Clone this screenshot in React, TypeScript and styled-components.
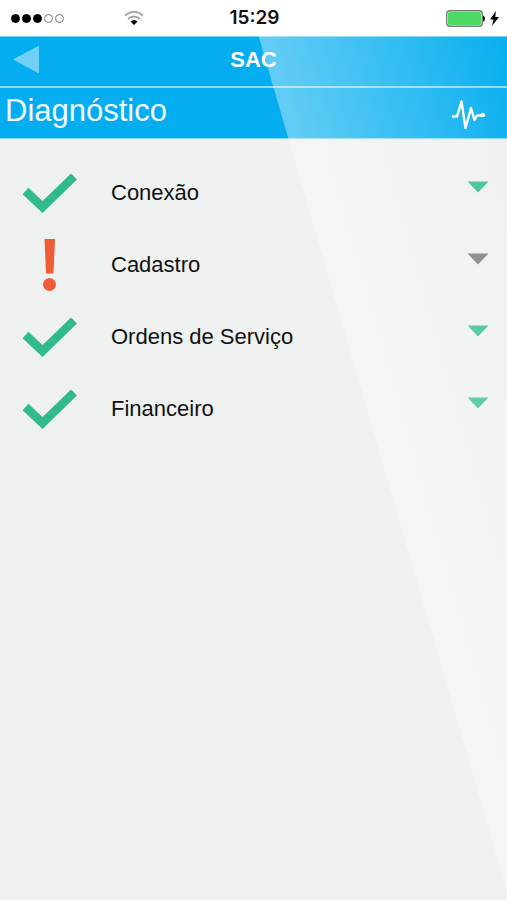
import React from "react";
import styled, { createGlobalStyle } from "styled-components";

const GlobalStyle = createGlobalStyle`
  *, *::before, *::after { box-sizing: border-box; }
  body {
    margin: 0;
    background: #eef1f0;
    font-family: "Liberation Sans", Arial, sans-serif;
    color: #111;
  }
  button { font: inherit; color: inherit; border: 0; padding: 0; background: none; cursor: pointer; }
  svg { display: block; }
`;

const Screen = styled.div`
  display: flex;
  flex-direction: column;
  min-height: 100vh;
`;

const StatusBar = styled.div`
  display: grid;
  grid-template-columns: 1fr auto 1fr;
  align-items: center;
  height: 36px;
  padding: 0 8px 0 10px;
  background: #fff;
`;

const Signal = styled.div`
  display: flex;
  align-items: center;
  gap: 60px;
  padding-left: 1px;
`;

const SignalDots = styled.div`
  display: flex;
  gap: 2px;
`;

const Dot = styled.span<{ $filled: boolean }>`
  width: 9px;
  height: 9px;
  border: 1px solid ${(p) => (p.$filled ? "#000" : "#777")};
  border-radius: 50%;
  background: ${(p) => (p.$filled ? "#000" : "transparent")};
`;

const Clock = styled.time`
  font: 600 19px/24px Inter, sans-serif;
`;

const Power = styled.div`
  display: flex;
  align-items: center;
  justify-content: flex-end;
  gap: 5px;
`;

const AppView = styled.main`
  position: relative;
  flex: 1;
`;

const Glare = styled.div`
  position: absolute;
  inset: 0;
  pointer-events: none;
  clip-path: polygon(51% 0, 100% 0, 100% 99%);
  background: linear-gradient(254deg, rgba(255, 255, 255, 0.02), rgba(255, 255, 255, 0.38) 32%);
`;

const TitleBar = styled.header`
  display: grid;
  grid-template-columns: 1fr auto 1fr;
  align-items: center;
  height: 52px;
  padding: 0 12px 4px;
  border-top: 1px solid #6fd0f6;
  border-bottom: 2px solid #8ddaf8;
  background: #03adef;
`;

const BackButton = styled.button`
  justify-self: start;
`;

const AppTitle = styled.span`
  font-size: 22px;
  line-height: 26px;
  font-weight: 700;
  color: #fff;
`;

const SectionBar = styled.div`
  display: flex;
  align-items: center;
  justify-content: space-between;
  height: 51px;
  padding: 0 21px 4px 5px;
  border-bottom: 1px solid #7fd5f6;
  background: #03adef;
`;

const SectionTitle = styled.h1`
  margin: 0;
  font-size: 31px;
  line-height: 36px;
  font-weight: 400;
  color: #f2fbff;
`;

const PulseIcon = styled.svg`
  margin-top: 4px;
`;

const CheckList = styled.ul`
  margin: 0;
  padding: 18px 0 0;
  list-style: none;
`;

const CheckRow = styled.button`
  display: grid;
  grid-template-columns: 56px 1fr 22px;
  column-gap: 33px;
  align-items: center;
  width: 100%;
  height: 72px;
  padding: 0 18px 0 22px;
  text-align: left;
`;

const CheckName = styled.span`
  font-size: 22px;
  line-height: 26px;
`;

const Chevron = styled.svg<{ $muted: boolean }>`
  margin-bottom: 12px;
  fill: ${(p) => (p.$muted ? "#7c7c7c" : "#34be90")};
`;

type Status = "ok" | "alert";

const checks: { name: string; status: Status }[] = [
  { name: "Conexão", status: "ok" },
  { name: "Cadastro", status: "alert" },
  { name: "Ordens de Serviço", status: "ok" },
  { name: "Financeiro", status: "ok" },
];

function StatusIcon({ status }: { status: Status }) {
  return status === "ok" ? (
    <svg width="56" height="54" viewBox="0 0 56 54" role="img" aria-label="OK">
      <path d="M3.500 25 L20.500 41 L52 10.500" fill="none" stroke="#31bb8c" strokeWidth="8.600" />
    </svg>
  ) : (
    <svg width="56" height="54" viewBox="0 0 56 54" role="img" aria-label="Atenção">
      <path d="M22.500 1 H33 L31.500 35.500 H24 Z" fill="#f15c38" />
      <circle cx="27.500" cy="46.500" r="6.500" fill="#f15c38" />
    </svg>
  );
}

export default function App() {
  return (
    <Screen>
      <GlobalStyle />
      <StatusBar>
        <Signal>
          <SignalDots>
            {[true, true, true, false, false].map((filled, i) => (
              <Dot key={i} $filled={filled} />
            ))}
          </SignalDots>
          <svg width="20" height="16" viewBox="0 0 20 16" fill="none" role="img" aria-label="Wi-Fi">
            <path d="M1 5.500 Q10 -2 19 5.500" stroke="#aaa" strokeWidth="1.800" />
            <path d="M4 9 Q10 4 16 9" stroke="#a0a0a0" strokeWidth="1.800" />
            <path d="M6.500 11.500 Q10 8.500 13.500 11.500 L10 15 Z" fill="#000" />
          </svg>
        </Signal>
        <Clock>15:29</Clock>
        <Power>
          <svg width="39" height="17" viewBox="0 0 39 17" role="img" aria-label="Bateria">
            <rect x="0.700" y="0.700" width="35.600" height="15.600" rx="3" fill="#fff" stroke="#777" strokeWidth="1.400" />
            <rect x="2" y="2" width="33" height="13" rx="1.500" fill="#4cd964" />
            <path d="M37 5.500 Q39 6 39 8.500 T37 11.500 Z" fill="#111" />
          </svg>
          <svg width="9" height="15" viewBox="0 0 9 15" aria-hidden="true">
            <path d="M6 0 L0 8.500 H3.500 L2 15 L9 6 H5.200 Z" fill="#000" />
          </svg>
        </Power>
      </StatusBar>
      <AppView>
        <TitleBar>
          <BackButton type="button" aria-label="Voltar">
            <svg width="27" height="29" viewBox="0 0 27 29">
              <path d="M1 14.500 L27 0.500 V28.500 Z" fill="#70d0f6" />
            </svg>
          </BackButton>
          <AppTitle>SAC</AppTitle>
        </TitleBar>
        <SectionBar>
          <SectionTitle>Diagnóstico</SectionTitle>
          <PulseIcon width="35" height="32" viewBox="0 0 35 32" fill="none" aria-hidden="true">
            <path
              d="M2 19.500 H6 L10.500 4.500 L14.500 31 L20 11 L23.500 23 L26 18.500 H32"
              stroke="#fff"
              strokeWidth="2.400"
              strokeLinejoin="round"
              strokeLinecap="round"
            />
            <circle cx="32" cy="18" r="2.200" fill="#fff" />
          </PulseIcon>
        </SectionBar>
        <CheckList>
          {checks.map(({ name, status }) => (
            <li key={name}>
              <CheckRow type="button">
                <StatusIcon status={status} />
                <CheckName>{name}</CheckName>
                <Chevron $muted={status === "alert"} width="22" height="12" viewBox="0 0 22 12" aria-hidden="true">
                  <path d="M0.500 0.500 H21.500 L11 11.500 Z" />
                </Chevron>
              </CheckRow>
            </li>
          ))}
        </CheckList>
        <Glare />
      </AppView>
    </Screen>
  );
}
